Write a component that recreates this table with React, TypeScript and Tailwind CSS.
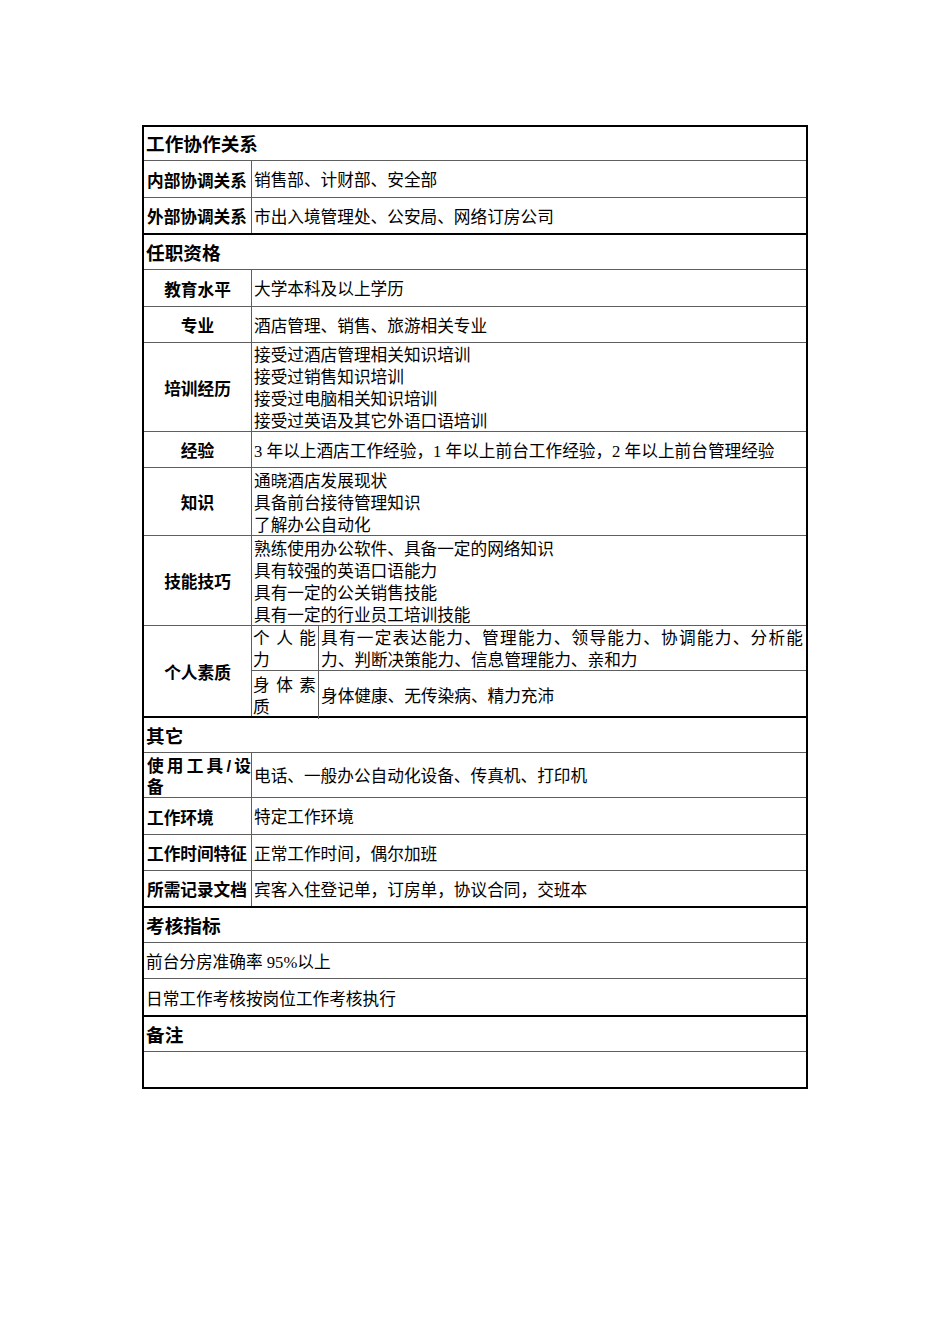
import React from "react";

// 表格线颜色
const line = "border-[#5e5e5e]";
const valueFont = "font-['Liberation_Serif','Noto_Sans_CJK_SC',serif] font-normal text-[16.67px]";
const labelFont = "font-['Liberation_Sans','Noto_Sans_CJK_SC',sans-serif] font-bold text-[16.67px]";
// 字形偏上，统一下移一点
const nudge = "pt-[4px]";

function Header({ title, h = "h-[34px]" }: { title: string; h?: string }) {
  return (
    <div
      className={`${h} flex items-center pl-[2px] ${nudge} font-['Liberation_Sans','Noto_Sans_CJK_SC',sans-serif] font-bold text-[18.67px] leading-none`}
    >
      {title}
    </div>
  );
}

function Row({
  h,
  label,
  center = false,
  children,
}: {
  h: string;
  label: React.ReactNode;
  center?: boolean;
  children: React.ReactNode;
}) {
  return (
    <div className={`flex border-t ${line} ${h}`}>
      <div
        className={`w-[108px] shrink-0 border-r ${line} flex items-center ${nudge} ${
          center ? "justify-center" : "pl-[3px]"
        } ${labelFont} leading-[21px]`}
      >
        {label}
      </div>
      <div className={`flex-1 flex flex-col justify-center pl-[2px] pr-[3px] ${nudge} ${valueFont} leading-[22px]`}>
        {children}
      </div>
    </div>
  );
}

function Lines({ items }: { items: string[] }) {
  return (
    <>
      {items.map((t) => (
        <div key={t}>{t}</div>
      ))}
    </>
  );
}

function Split({ first, rest }: { first: string; rest: string }) {
  return (
    <div className="w-full">
      <div className="text-justify [text-align-last:justify]">{first}</div>
      <div>{rest}</div>
    </div>
  );
}

export default function App() {
  return (
    <div className="w-[950px] h-[1344px] bg-white text-black pt-[125px] pl-[142px]">
      <div className="w-[666px] border-2 border-black">
        {/* 工作协作关系 */}
        <section>
          <Header title="工作协作关系" h="h-[33px]" />
          <Row h="h-[37px]" label="内部协调关系">
            销售部、计财部、安全部
          </Row>
          <Row h="h-[36px]" label="外部协调关系">
            市出入境管理处、公安局、网络订房公司
          </Row>
        </section>

        {/* 任职资格 */}
        <section className="border-t-2 border-black">
          <Header title="任职资格" />
          <Row h="h-[37px]" label="教育水平" center>
            大学本科及以上学历
          </Row>
          <Row h="h-[36px]" label="专业" center>
            酒店管理、销售、旅游相关专业
          </Row>
          <Row h="h-[89px]" label="培训经历" center>
            <Lines
              items={[
                "接受过酒店管理相关知识培训",
                "接受过销售知识培训",
                "接受过电脑相关知识培训",
                "接受过英语及其它外语口语培训",
              ]}
            />
          </Row>
          <Row h="h-[36px]" label="经验" center>
            3 年以上酒店工作经验，1 年以上前台工作经验，2 年以上前台管理经验
          </Row>
          <Row h="h-[68px]" label="知识" center>
            <Lines items={["通晓酒店发展现状", "具备前台接待管理知识", "了解办公自动化"]} />
          </Row>
          <Row h="h-[90px]" label="技能技巧" center>
            <Lines
              items={[
                "熟练使用办公软件、具备一定的网络知识",
                "具有较强的英语口语能力",
                "具有一定的公关销售技能",
                "具有一定的行业员工培训技能",
              ]}
            />
          </Row>
          <div className={`flex border-t ${line} h-[91px]`}>
            <div className={`w-[108px] shrink-0 border-r ${line} flex items-center justify-center ${nudge} ${labelFont}`}>
              个人素质
            </div>
            <div className={`flex-1 flex flex-col ${valueFont} leading-[22px]`}>
              <div className="h-[44px] flex">
                <div className={`w-[67px] shrink-0 border-r ${line} flex items-center pl-[1px] pr-[2px] ${nudge}`}>
                  <Split first="个人能" rest="力" />
                </div>
                <div className={`flex-1 flex items-center pl-[2px] pr-[3px] ${nudge}`}>
                  <Split
                    first="具有一定表达能力、管理能力、领导能力、协调能力、分析能"
                    rest="力、判断决策能力、信息管理能力、亲和力"
                  />
                </div>
              </div>
              <div className={`flex-1 flex border-t ${line}`}>
                <div className={`w-[67px] shrink-0 border-r ${line} flex items-center pl-[1px] pr-[2px] ${nudge}`}>
                  <Split first="身体素" rest="质" />
                </div>
                <div className={`flex-1 flex items-center pl-[2px] ${nudge}`}>身体健康、无传染病、精力充沛</div>
              </div>
            </div>
          </div>
        </section>

        {/* 其它 */}
        <section className="border-t-2 border-black">
          <Header title="其它" />
          <Row h="h-[45px]" label={<Split first="使用工具/设" rest="备" />}>
            电话、一般办公自动化设备、传真机、打印机
          </Row>
          <Row h="h-[37px]" label="工作环境">
            特定工作环境
          </Row>
          <Row h="h-[36px]" label="工作时间特征">
            正常工作时间，偶尔加班
          </Row>
          <Row h="h-[36px]" label="所需记录文档">
            宾客入住登记单，订房单，协议合同，交班本
          </Row>
        </section>

        {/* 考核指标 */}
        <section className="border-t-2 border-black">
          <Header title="考核指标" />
          <div className={`h-[36px] border-t ${line} flex items-center pl-[2px] ${nudge} ${valueFont}`}>
            前台分房准确率 95%以上
          </div>
          <div className={`h-[37px] border-t ${line} flex items-center pl-[2px] ${nudge} ${valueFont}`}>
            日常工作考核按岗位工作考核执行
          </div>
        </section>

        {/* 备注 */}
        <section className="border-t-2 border-black">
          <Header title="备注" />
          <div className={`h-[36px] border-t ${line}`} />
        </section>
      </div>
    </div>
  );
}
